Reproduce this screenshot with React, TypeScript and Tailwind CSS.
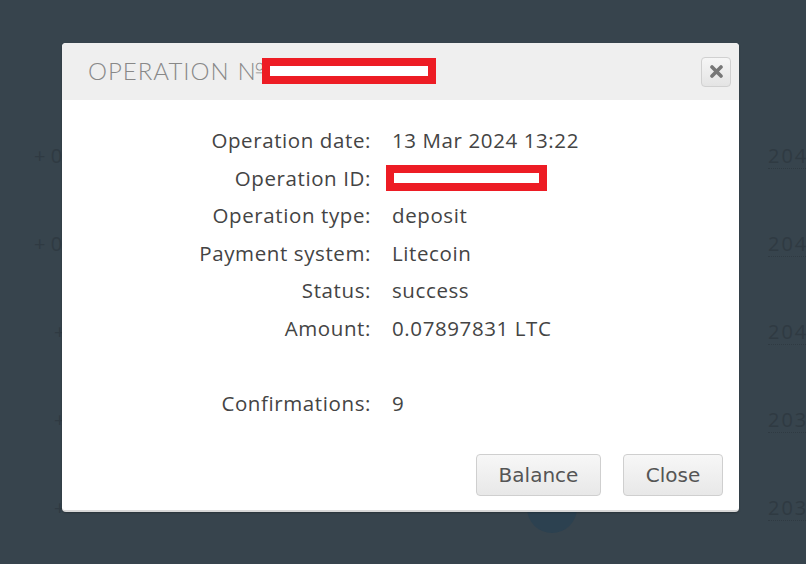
import React from "react";

const rows: { label: string; value: React.ReactNode }[] = [
  { label: "Operation date:", value: "13 Mar 2024 13:22" },
  {
    label: "Operation ID:",
    value: (
      <span className="block w-[161px] h-[26px] border-[8px] border-[#ed1c24] bg-white -ml-[6px]" />
    ),
  },
  { label: "Operation type:", value: "deposit" },
  { label: "Payment system:", value: "Litecoin" },
  { label: "Status:", value: "success" },
  { label: "Amount:", value: "0.07897831 LTC" },
  { label: "", value: "" },
  { label: "Confirmations:", value: "9" },
];

const bgRows = ["204", "204", "204", "203", "203"];

export default function App() {
  return (
    <div className="relative w-[806px] h-[564px] overflow-hidden bg-[#37444d] font-['Open_Sans',sans-serif]">
      {/* page content behind the overlay */}
      <div className="flex flex-col pt-[112px] text-[#2f3a42] text-[20px]">
        {bgRows.map((r, i) => (
          <div key={i} className="flex items-center justify-between h-[88px] pl-[34px]">
            <span className={i < 2 ? "" : "pl-[20px]"}>{i < 2 ? "+ 0" : "+"}</span>
            <span className="w-[38px] tracking-[2px] border-b border-dotted border-[#2f3a42] leading-[24px] overflow-hidden whitespace-nowrap">
              {r}
            </span>
          </div>
        ))}
      </div>
      <div className="absolute left-[527px] top-[483px] w-[50px] h-[50px] rounded-full bg-[#2c4150]" />

      {/* modal */}
      <div className="absolute left-[62px] top-[43px] w-[677px] h-[469px] bg-white rounded-[4px] shadow-[0_1px_2px_rgba(0,0,0,0.25)] border-b-2 border-[#d8d8d8] flex flex-col overflow-hidden">
        <div className="h-[57px] bg-[#efefef] flex items-center justify-between pl-[26px] pr-[8px] shrink-0">
          <div className="flex items-center -mt-[2px]">
            <span className="font-['Lato',sans-serif] font-light text-[24px] tracking-[1px] text-[#888]">
              OPERATION №
            </span>
            <span className="block w-[174px] h-[26px] border-[8px] border-[#ed1c24] bg-white -ml-[3px]" />
          </div>
          <button className="w-[30px] h-[30px] rounded-[4px] border border-[#d0d0d0] bg-gradient-to-b from-[#f6f6f6] to-[#e4e4e4] flex items-center justify-center">
            <svg width="13" height="13" viewBox="0 0 13 13">
              <path d="M2 2 L11 11 M11 2 L2 11" stroke="#777" strokeWidth="3.6" strokeLinecap="round" />
            </svg>
          </button>
        </div>

        <div className="grid grid-cols-[309px_1fr] gap-x-[21px] pt-[22px] text-[20.5px] tracking-[0.6px] text-[#444]">
          {rows.map((r, i) => (
            <React.Fragment key={i}>
              <div className="text-right h-[37.5px] leading-[37.5px] whitespace-nowrap">{r.label}</div>
              <div className="h-[37.5px] flex items-center whitespace-nowrap">{r.value}</div>
            </React.Fragment>
          ))}
        </div>

        <div className="mt-auto flex justify-end gap-[22px] pr-[16px] pb-[14px] font-['DejaVu_Sans',sans-serif] text-[20px] text-[#555]">
          <button className="w-[125px] h-[42px] rounded-[4px] border border-[#cfcfcf] bg-gradient-to-b from-[#f7f7f7] to-[#e8e8e8]">
            Balance
          </button>
          <button className="w-[100px] h-[42px] rounded-[4px] border border-[#cfcfcf] bg-gradient-to-b from-[#f7f7f7] to-[#e8e8e8]">
            Close
          </button>
        </div>
      </div>
    </div>
  );
}
